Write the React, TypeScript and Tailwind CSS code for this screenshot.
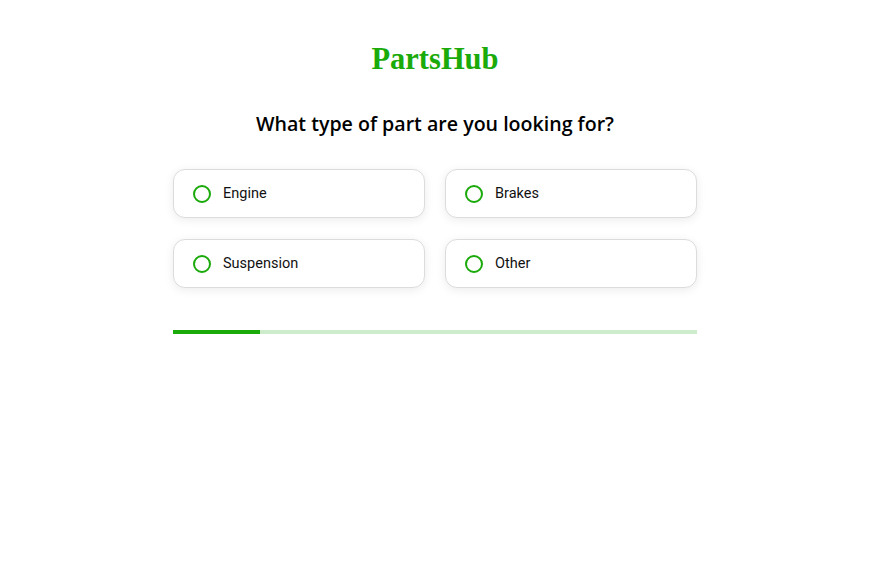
import React, { useState } from 'react';

const options = ['Engine', 'Brakes', 'Suspension', 'Other'];

const App: React.FC = () => {
  const [selected, setSelected] = useState<string | null>(null);

  return (
    <div className="min-h-screen bg-white flex flex-col items-center pt-[40px]">
      <h1 className="text-[30.5px] leading-[38px] font-bold text-[#1aaa0a] font-['Liberation_Serif',serif]">
        PartsHub
      </h1>
      <h2 className="mt-[32px] text-[19.6px] leading-[28px] font-semibold text-black font-['Open_Sans',sans-serif]">
        What type of part are you looking for?
      </h2>
      <div className="mt-[31px] w-[524px] grid grid-cols-2 gap-x-[20px] gap-y-[21px]">
        {options.map((opt) => (
          <button
            key={opt}
            onClick={() => setSelected(opt)}
            className="h-[49px] flex items-center gap-[12px] px-[19px] bg-white border border-[#dcdcdc] rounded-[12px] shadow-[0_2px_10px_rgba(0,0,0,0.08)] text-left"
          >
            <span className="w-[18px] h-[18px] rounded-full border-2 border-[#1aaa0a] flex items-center justify-center">
              {selected === opt && <span className="w-[8px] h-[8px] rounded-full bg-[#1aaa0a]" />}
            </span>
            <span className="text-[14.5px] text-[#111] font-['Roboto',sans-serif]">{opt}</span>
          </button>
        ))}
      </div>
      <div className="mt-[42px] w-[524px] h-[4px] bg-[#cdeccb]">
        <div className="h-full w-[87px] bg-[#1aaa0a]" />
      </div>
    </div>
  );
};

export default App;
